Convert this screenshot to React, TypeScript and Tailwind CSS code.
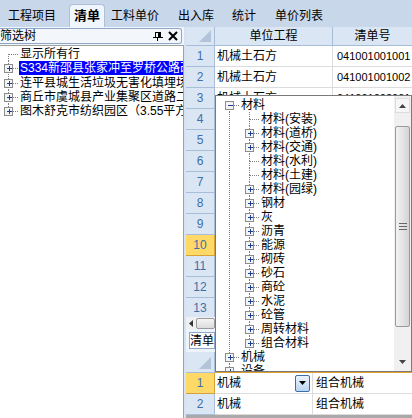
import React from "react";

const FONT = '"Liberation Sans", "Noto Sans CJK SC", sans-serif';

type Conn = { box?: "plus" | "minus"; up?: boolean; down?: boolean };

// tree connector drawing: dotted lines + expander box
function Connector({ box, up = true, down = true, w = 20, cx = 9.5, h = 14 }: Conn & { w?: number; cx?: number; h?: number }) {
  const cy = h / 2;
  return (
    <svg width={w} height={h} className="shrink-0" shapeRendering="crispEdges">
      {up && <line x1={cx} y1={0} x2={cx} y2={cy} stroke="#808080" strokeDasharray="1 1" />}
      {down && <line x1={cx} y1={cy} x2={cx} y2={h} stroke="#808080" strokeDasharray="1 1" />}
      <line x1={cx} y1={cy + 0.5} x2={w} y2={cy + 0.5} stroke="#808080" strokeDasharray="1 1" />
      {box && (
        <g>
          <rect x={cx - 4} y={cy - 4} width={8} height={8} fill="#f4f4f4" stroke="#8c8c8c" />
          <line x1={cx - 2} y1={cy + 0.5} x2={cx + 3} y2={cy + 0.5} stroke="#1b3f97" />
          {box === "plus" && <line x1={cx + 0.5} y1={cy - 2} x2={cx + 0.5} y2={cy + 3} stroke="#1b3f97" />}
        </g>
      )}
    </svg>
  );
}

function Guide({ w = 20, cx = 9.5, h = 14 }: { w?: number; cx?: number; h?: number }) {
  return (
    <svg width={w} height={h} className="shrink-0" shapeRendering="crispEdges">
      <line x1={cx} y1={0} x2={cx} y2={h} stroke="#808080" strokeDasharray="1 1" />
    </svg>
  );
}

const leftTree = [
  { t: "显示所有行", box: undefined, sel: false },
  { t: "S334新邵县张家冲至罗桥公路改建工程", box: "plus" as const, sel: true },
  { t: "连平县城生活垃圾无害化填埋场工程", box: "plus" as const, sel: false },
  { t: "商丘市虞城县产业集聚区道路二期工程", box: "plus" as const, sel: false },
  { t: "图木舒克市纺织园区（3.55平方公里）", box: "plus" as const, sel: false },
];

const popupTree: { t: string; lvl: number; box?: "plus" | "minus" }[] = [
  { t: "材料", lvl: 0, box: "minus" },
  { t: "材料(安装)", lvl: 1 },
  { t: "材料(道桥)", lvl: 1, box: "plus" },
  { t: "材料(交通)", lvl: 1, box: "plus" },
  { t: "材料(水利)", lvl: 1 },
  { t: "材料(土建)", lvl: 1 },
  { t: "材料(园绿)", lvl: 1, box: "plus" },
  { t: "钢材", lvl: 1, box: "plus" },
  { t: "灰", lvl: 1, box: "plus" },
  { t: "沥青", lvl: 1, box: "plus" },
  { t: "能源", lvl: 1, box: "plus" },
  { t: "砌砖", lvl: 1, box: "plus" },
  { t: "砂石", lvl: 1, box: "plus" },
  { t: "商砼", lvl: 1, box: "plus" },
  { t: "水泥", lvl: 1, box: "plus" },
  { t: "砼管", lvl: 1, box: "plus" },
  { t: "周转材料", lvl: 1, box: "plus" },
  { t: "组合材料", lvl: 1, box: "plus" },
  { t: "机械", lvl: 0, box: "plus" },
  { t: "设备", lvl: 0, box: "plus" },
];

const upperRows = Array.from({ length: 13 }, (_, i) => ({
  n: i + 1,
  a: i < 3 ? "机械土石方" : "",
  b: i === 0 ? "041001001001" : i === 1 ? "041001001002" : i === 2 ? "041001002001" : "",
}));

function RowHead({ n, active }: { n: number | string; active?: boolean }) {
  return (
    <div
      className={
        "flex w-[29px] shrink-0 items-center justify-center border-b border-r " +
        (active
          ? "border-[#d7a13a] bg-[#fed967] text-[#3d6fa6]"
          : "border-[#a8bdd8] bg-[#dbe6f4] text-[#3d6fa6]")
      }
    >
      <span className="text-[12px]">{n}</span>
    </div>
  );
}

function Corner() {
  return (
    <div className="flex w-[29px] shrink-0 items-end justify-end border-r border-b border-[#a8bdd8] bg-[#dbe6f4] p-[3px]">
      <svg width="12" height="12">
        <polygon points="12,0 12,12 0,12" fill="#b3c3d8" />
      </svg>
    </div>
  );
}

export default function App() {
  return (
    <div
      className="relative flex h-[418px] w-[412px] flex-col overflow-hidden bg-[#d6e3f3] text-[12px] text-black"
      style={{ fontFamily: FONT }}
    >
      {/* tab bar */}
      <div className="flex h-[27px] shrink-0 items-end bg-[#c8d7ea] text-[12px]">
        <div className="ml-[8px] flex h-[23px] items-center">工程项目</div>
        <div className="ml-[13px] flex h-[23px] items-center rounded-t-[4px] border border-b-0 border-[#aebfd6] bg-[#f0f6fd] px-[4px] text-[13px] font-bold">
          清单
        </div>
        <div className="ml-[6px] flex h-[23px] items-center">工料单价</div>
        <div className="ml-[19px] flex h-[23px] items-center">出入库</div>
        <div className="ml-[18px] flex h-[23px] items-center">统计</div>
        <div className="ml-[19px] flex h-[23px] items-center">单价列表</div>
      </div>

      <div className="flex min-h-0 flex-1">
        {/* left filter tree */}
        <div className="flex w-[184px] shrink-0 flex-col bg-[#f0f6fd]">
          <div className="mt-[1px] flex h-[16px] w-[182px] items-center rounded-r-[3px] border border-l-0 border-[#8ea6c7] bg-[#f3f7fc] pr-[3px]">
            <span className="flex-1 text-[12px] leading-none">筛选树</span>
            <svg width="10" height="10" className="mr-[5px]" shapeRendering="crispEdges">
              <rect x="2" y="1" width="5" height="5" fill="none" stroke="#000" />
              <line x1="6" y1="1" x2="6" y2="6" stroke="#000" strokeWidth="1.5" />
              <line x1="0" y1="6.5" x2="10" y2="6.5" stroke="#000" />
              <line x1="4.5" y1="6" x2="4.5" y2="10" stroke="#000" />
            </svg>
            <svg width="10" height="10">
              <path d="M1 1 L9 9 M9 1 L1 9" stroke="#000" strokeWidth="2" />
            </svg>
          </div>
          <div className="mt-[1px] flex-1 overflow-hidden border-r border-t border-[#a0a0a0] bg-white pt-[1px]">
            {leftTree.map((r, i) => (
              <div key={r.t} className="flex h-[14.3px] items-center overflow-hidden">
                <Connector box={r.box} up={i > 0} down={i < leftTree.length - 1} w={19} cx={8.5} h={14.3} />
                <span
                  className={
                    "whitespace-nowrap pl-[1px] pr-[1px] text-[12px] leading-[14px] " +
                    (r.sel ? "flex-1 bg-[#0000ff] text-white" : "")
                  }
                >
                  {r.t}
                </span>
              </div>
            ))}
          </div>
        </div>
        <div className="w-[2px] shrink-0 bg-[#d6e3f3]" />

        {/* right grid area */}
        <div className="flex min-w-0 flex-1 flex-col bg-white">
          {/* header */}
          <div className="flex h-[19px] shrink-0 bg-[#dbe6f4]">
            <Corner />
            <div className="flex w-[118px] shrink-0 items-center justify-center border-b border-r border-[#a8bdd8] text-[12px]">单位工程</div>
            <div className="flex flex-1 items-center justify-center border-b border-[#a8bdd8] text-[12px]">清单号</div>
          </div>
          {/* rows */}
          <div className="flex h-[271px] shrink-0 flex-col overflow-hidden">
            {upperRows.map((r) => (
              <div key={r.n} className="flex h-[21px] shrink-0">
                <RowHead n={r.n} active={r.n === 10} />
                <div className="flex w-[118px] shrink-0 items-center border-b border-r border-[#dcdcdc] pl-[2px] text-[12px]">{r.a}</div>
                <div className="flex flex-1 items-center overflow-hidden whitespace-nowrap border-b border-[#dcdcdc] pl-[4px] text-[11px]">{r.b}</div>
              </div>
            ))}
          </div>
          {/* horizontal scrollbar */}
          <div className="flex h-[12px] shrink-0 items-center bg-[#eef0f2]">
            <div className="flex h-full w-[10px] items-center justify-center">
              <svg width="5" height="7">
                <polygon points="4,0 4,7 0,3.5" fill="#333" />
              </svg>
            </div>
            <div className="h-[11px] w-[19px] rounded-[2px] border border-[#9a9a9a] bg-gradient-to-b from-[#f5f5f5] to-[#dcdcdc]" />
          </div>
          {/* sheet tab */}
          <div className="flex h-[23px] shrink-0 items-center bg-[#eef4fb] pl-[3px]">
            <div className="flex h-[17px] w-[26px] items-center justify-center overflow-hidden whitespace-nowrap border border-[#8ea6c7] bg-white text-[12px]">清单</div>
          </div>
          {/* lower grid */}
          <div className="flex h-[21px] shrink-0 bg-[#dbe6f4]">
            <Corner />
            <div className="flex-1 border-b border-[#e0a030]" />
          </div>
          {[1, 2].map((n) => (
            <div key={n} className="flex h-[21px] shrink-0">
              <RowHead n={n} active={n === 1} />
              <div className="flex w-[98px] shrink-0 items-center justify-between border-b border-r border-[#dcdcdc] pl-[2px] text-[12px]">
                <span>机械</span>
                {n === 1 && (
                  <div className="mr-[2px] flex h-[17px] w-[15px] items-center justify-center rounded-[2px] border border-[#3a6ea5] bg-gradient-to-b from-[#eaf3fd] to-[#bcd6f2]">
                    <svg width="7" height="4">
                      <polygon points="0,0 7,0 3.5,4" fill="#000" />
                    </svg>
                  </div>
                )}
              </div>
              <div className="flex flex-1 items-center border-b border-[#dcdcdc] pl-[3px] text-[12px]">组合机械</div>
            </div>
          ))}
          <div className="flex-1 bg-[#a9a9a9]" />
        </div>
      </div>

      {/* dropdown tree popup */}
      <div className="absolute left-[215px] top-[95px] flex h-[277px] w-[197px] border border-[#7a7a7a] bg-white shadow-[0_1px_0_#e0a030]">
        <div className="flex-1 overflow-hidden pl-[4px] pt-[2px]">
          {popupTree.map((r, i) => {
            const lastTop = i === popupTree.length - 1;
            return (
              <div key={r.t} className="flex h-[14px] items-center">
                {r.lvl === 1 && <Guide />}
                <Connector box={r.box} up={!(i === 0)} down={r.lvl === 0 ? !lastTop : true} />
                <span className="whitespace-nowrap pl-[1px] text-[12px] leading-[14px]">{r.t}</span>
              </div>
            );
          })}
        </div>
        {/* vertical scrollbar */}
        <div className="flex w-[17px] shrink-0 flex-col items-center bg-[#f0f0f0] py-[2px]">
          <div className="flex h-[15px] w-[15px] items-center justify-center border border-[#dcdcdc] bg-[#f6f6f6]">
            <svg width="7" height="4">
              <polygon points="0,4 7,4 3.5,0" fill="#444" />
            </svg>
          </div>
          <div className="mt-[13px] flex h-[201px] w-[15px] items-center justify-center rounded-[2px] border border-[#9b9b9b] bg-gradient-to-r from-[#f2f2f2] via-[#e4e4e4] to-[#d4d4d4]">
            <svg width="8" height="7" shapeRendering="crispEdges">
              <line x1="0" y1="0.5" x2="8" y2="0.5" stroke="#666" />
              <line x1="0" y1="3.5" x2="8" y2="3.5" stroke="#666" />
              <line x1="0" y1="6.5" x2="8" y2="6.5" stroke="#666" />
            </svg>
          </div>
          <div className="flex-1" />
          <div className="flex h-[15px] w-[15px] items-center justify-center">
            <svg width="7" height="4">
              <polygon points="0,0 7,0 3.5,4" fill="#444" />
            </svg>
          </div>
        </div>
      </div>
    </div>
  );
}
